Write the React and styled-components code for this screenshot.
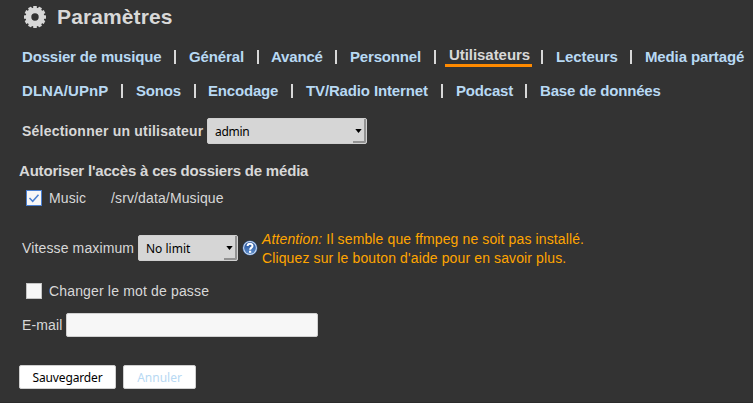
import React from "react";
import styled, { createGlobalStyle, css } from "styled-components";

const GlobalStyle = createGlobalStyle`
  * { box-sizing: border-box; }
  body {
    margin: 0;
    background: #333333;
    color: #d8d8d8;
    font-family: "Liberation Sans", Arial, sans-serif;
    font-size: 14px;
    overflow: hidden;
  }
`;

const Page = styled.main`
  width: 753px;
  height: 403px;
  padding-left: 22px;
  background: #333333;
  border-bottom: 1px solid #2b2b2b;
  overflow: hidden;
  white-space: nowrap;
`;

const Heading = styled.h1`
  display: flex;
  align-items: center;
  gap: 11px;
  height: 34px;
  margin: 0;
  padding-left: 2px;
  font-size: 21px;
  letter-spacing: 0.12px;
  line-height: 24px;

  svg { flex: none; }
`;

const NavRow = styled.nav`
  display: flex;
  align-items: flex-start;
  height: 34px;
  padding-top: 14px;
  font-size: 15px;
  line-height: 18px;
`;

const NavLink = styled.a`
  flex: none;
  width: ${(p) => p.$width}px;
  color: #b8d9f3;
  font-weight: bold;
  letter-spacing: ${(p) => p.$spacing ?? -0.18}px;
  text-decoration: none;

  ${(p) =>
    p.$active &&
    css`
      width: ${p.$width + 8}px;
      height: 21px;
      margin: -2px -4px 0 -4px;
      padding-left: 4px;
      color: #d8d8d8;
      border-bottom: 3px solid #ff8a00;
    `}
`;

const Divider = styled.span`
  flex: none;
  width: 2px;
  height: 14px;
  margin: 2px ${(p) => 26 - (p.$before || 13)}px 0 ${(p) => p.$before || 13}px;
  background: #d8d8d8;
`;

const Row = styled.div`
  display: flex;
  align-items: center;
  height: ${(p) => p.$height}px;
  margin-top: ${(p) => p.$top || 0}px;
`;

const Label = styled.label`
  flex: none;
  width: ${(p) => p.$width}px;
  font-size: 14px;
  font-weight: ${(p) => (p.$bold ? "bold" : "normal")};
  letter-spacing: ${(p) => p.$spacing ?? 0.13}px;
  line-height: 18px;
`;

const SectionTitle = styled.h2`
  height: 18px;
  margin: 18px 0 0 -3px;
  font-size: 15px;
  letter-spacing: -0.19px;
  line-height: 18px;
`;

const SelectBox = styled.button`
  display: flex;
  flex: none;
  justify-content: space-between;
  width: ${(p) => p.$width}px;
  height: 26px;
  padding: 0 0 0 7px;
  border: 1px solid #d0d0d0;
  border-radius: 2px;
  background: #d6d6d6;
  color: #000;
  font: 12px/25px "Noto Sans", sans-serif;
  letter-spacing: ${(p) => p.$spacing || 0}px;
  text-align: left;
`;

const Arrow = styled.span`
  display: flex;
  align-items: flex-start;
  width: 13px;
  height: 24px;
  padding: 10px 0 0 2px;
  border-right: 2px solid #929292;
  border-bottom: 2px solid #929292;
  border-bottom-right-radius: 2px;
`;

const CheckBox = styled.span`
  display: flex;
  flex: none;
  align-items: center;
  justify-content: center;
  width: 16px;
  height: 16px;
  margin: 0 7px 0 4px;
  border: 1px solid ${(p) => (p.$checked ? "#4a7fd0" : "#c4c4c4")};
  background: #f7f7f7;
`;

const Help = styled.span`
  display: flex;
  margin: 0 4px;
`;

const Warning = styled.p`
  margin: 2px 0 0;
  color: #ffa500;
  font-size: 14px;
  letter-spacing: 0.12px;
  line-height: 19px;
`;

const TextInput = styled.input`
  width: 252px;
  height: 24px;
  border: 1px solid #d0d0d0;
  border-radius: 2px;
  background: #f7f7f7;
`;

const Actions = styled.div`
  display: flex;
  gap: 7px;
  margin: 28px 0 0 -3px;
`;

const Button = styled.button`
  width: ${(p) => p.$width}px;
  height: 24px;
  padding: 0;
  border: 1px solid #d0d0d0;
  border-radius: 2px;
  background: #fff;
  color: ${(p) => (p.$muted ? "#b8d9f3" : "#000")};
  font: 12px/23px "Noto Sans", sans-serif;
  letter-spacing: ${(p) => p.$spacing || 0}px;
`;

const GearIcon = () => (
  <svg width="22" height="22" viewBox="-11 -11 22 22" fill="#d8d8d8">
    {Array.from({ length: 12 }, (_, i) => (
      <rect key={i} x="-1.8" y="-11" width="3.6" height="4" rx="0.5" transform={`rotate(${i * 30})`} />
    ))}
    <circle r="6.6" fill="none" stroke="#d8d8d8" strokeWidth="5.8" />
  </svg>
);

const HelpIcon = () => (
  <svg width="16" height="16" viewBox="0 0 16 16">
    <defs>
      <linearGradient id="help" x2="0" y2="1">
        <stop stopColor="#1f4c98" />
        <stop offset="1" stopColor="#5f8fcd" />
      </linearGradient>
    </defs>
    <circle cx="8" cy="8" r="7.5" fill="#3563a8" />
    <circle cx="8" cy="8" r="6.9" fill="#d3dff0" />
    <circle cx="8" cy="8" r="5.9" fill="url(#help)" />
    <path d="M5.6 6C5.6 2.9 10.5 2.9 10.5 5.9C10.5 7.6 8.1 7.7 8.1 9.7" fill="none" stroke="#fff" strokeWidth="2" />
    <rect x="7" y="10.7" width="2.2" height="2.1" fill="#fff" />
  </svg>
);

const Select = ({ width, spacing, children }) => (
  <SelectBox $width={width} $spacing={spacing}>
    {children}
    <Arrow>
      <svg width="7" height="4" viewBox="0 0 7 4"><path d="M0.3 0H6.7L3.5 4Z" /></svg>
    </Arrow>
  </SelectBox>
);

const navigation = [
  [
    { name: "Dossier de musique", width: 139 },
    { name: "Général", width: 54, spacing: -0.1, before: 14 },
    { name: "Avancé", width: 51 },
    { name: "Personnel", width: 71 },
    { name: "Utilisateurs", width: 79, spacing: -0.05 },
    { name: "Lecteurs", width: 61, spacing: -0.1 },
    { name: "Media partagé", width: 100, spacing: -0.13 },
  ],
  [
    { name: "DLNA/UPnP", width: 86, spacing: 0.05 },
    { name: "Sonos", width: 44, before: 14 },
    { name: "Encodage", width: 70 },
    { name: "TV/Radio Internet", width: 122, spacing: -0.14 },
    { name: "Podcast", width: 56 },
    { name: "Base de données", width: 121 },
  ],
];

export default function App() {
  return (
    <>
      <GlobalStyle />
      <Page>
        <Heading><GearIcon />Paramètres</Heading>
        {navigation.map((items, row) => (
          <NavRow key={row}>
            {items.map(({ name, width, before, spacing }, i) => (
              <React.Fragment key={name}>
                <NavLink $width={width} $spacing={spacing} $active={name === "Utilisateurs"}>{name}</NavLink>
                {i < items.length - 1 && <Divider $before={before} />}
              </React.Fragment>
            ))}
          </NavRow>
        ))}
        <Row $height={26} $top={16}>
          <Label $width={185} $spacing={0.21} $bold>Sélectionner un utilisateur</Label>
          <Select width={160} spacing={-0.3}>admin</Select>
        </Row>
        <SectionTitle>Autoriser l'accès à ces dossiers de média</SectionTitle>
        <Row $height={18} $top={9}>
          <CheckBox $checked>
            <svg width="12" height="12" viewBox="0 0 12 12"><path d="M1.5 6L4.7 9.3L10.5 2.8" fill="none" stroke="#4a7fd0" strokeWidth="1.5" /></svg>
          </CheckBox>
          <Label $width={62}>Music</Label>
          <Label as="span">/srv/data/Musique</Label>
        </Row>
        <Row $height={38} $top={22}>
          <Label $width={116}>Vitesse maximum</Label>
          <Select width={100}>No limit</Select>
          <Help><HelpIcon /></Help>
          <Warning><em>Attention:</em> Il semble que ffmpeg ne soit pas installé.<br />Cliquez sur le bouton d'aide pour en savoir plus.</Warning>
        </Row>
        <Row $height={18} $top={15}>
          <CheckBox />
          <Label $spacing={0.16}>Changer le mot de passe</Label>
        </Row>
        <Row $height={24} $top={13}>
          <Label $width={44}>E-mail</Label>
          <TextInput aria-label="E-mail" />
        </Row>
        <Actions>
          <Button $width={97} $spacing={-0.14}>Sauvegarder</Button>
          <Button $width={73} $muted>Annuler</Button>
        </Actions>
      </Page>
    </>
  );
}
